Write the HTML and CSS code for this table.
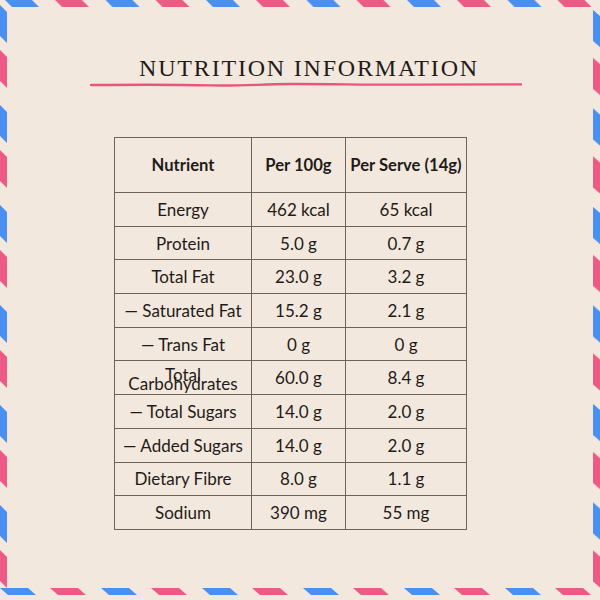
FILE: index.html
```html
<!DOCTYPE html>
<html>
<head>
<meta charset="utf-8">
<link rel="stylesheet" href="styles.css">
</head>
<body>
<div class="page">
  <svg class="airmail" width="600" height="600" viewBox="0 0 600 600">
    <defs>
      <pattern id="ptop" patternUnits="userSpaceOnUse" x="5" y="0" width="100.5" height="8">
        <polygon points="0,0 27,0 34,7 7,7" fill="#4a8ff2"/>
        <polygon points="50,0 77,0 84,7 57,7" fill="#ee5a86"/>
      </pattern>
      <pattern id="pbottom" patternUnits="userSpaceOnUse" x="0" y="588" width="101" height="8">
        <polygon points="0,0 28,0 36,7 8,7" fill="#4a8ff2"/>
        <polygon points="50,0 78,0 86,7 58,7" fill="#ee5a86"/>
      </pattern>
      <pattern id="pleft" patternUnits="userSpaceOnUse" x="0" y="5" width="8" height="100">
        <polygon points="0,0 7,7 7,38 0,31" fill="#4a8ff2"/>
        <polygon points="0,45 7,52 7,83 0,76" fill="#ee5a86"/>
      </pattern>
      <pattern id="pright" patternUnits="userSpaceOnUse" x="592" y="9" width="8" height="98.5">
        <polygon points="0,0 8,7 8,38 0,31" fill="#4a8ff2"/>
        <polygon points="0,48 8,55 8,86 0,79" fill="#ee5a86"/>
      </pattern>
    </defs>
    <rect x="0" y="0" width="600" height="7" fill="url(#ptop)"/>
    <rect x="0" y="588" width="600" height="7" fill="url(#pbottom)"/>
    <rect x="0" y="0" width="7" height="600" fill="url(#pleft)"/>
    <rect x="593" y="0" width="7" height="600" fill="url(#pright)"/>
  </svg>

  <header class="title-block">
    <h1 class="title">NUTRITION INFORMATION</h1>
    <svg class="underline" width="432" height="8" viewBox="0 0 432 8">
      <path d="M1 4 C 40 3.6, 80 3.2, 120 4.4 C 150 5.2, 170 3.2, 200 3 C 240 2.8, 280 4, 320 3.6 C 360 3.2, 400 3.4, 431 3.4" fill="none" stroke="#e9557f" stroke-width="2.4" stroke-linecap="round"/>
    </svg>
  </header>

  <table class="nutrition">
    <thead>
      <tr class="head-row">
        <th class="c1">Nutrient</th>
        <th class="c2">Per 100g</th>
        <th class="c3">Per Serve (14g)</th>
      </tr>
    </thead>
    <tbody>
      <tr><td>Energy</td><td>462 kcal</td><td>65 kcal</td></tr>
      <tr><td>Protein</td><td>5.0 g</td><td>0.7 g</td></tr>
      <tr><td>Total Fat</td><td>23.0 g</td><td>3.2 g</td></tr>
      <tr><td>— Saturated Fat</td><td>15.2 g</td><td>2.1 g</td></tr>
      <tr><td>— Trans Fat</td><td>0 g</td><td>0 g</td></tr>
      <tr><td class="squeezed">Total Carbohydrates</td><td>60.0 g</td><td>8.4 g</td></tr>
      <tr><td>— Total Sugars</td><td>14.0 g</td><td>2.0 g</td></tr>
      <tr><td>— Added Sugars</td><td>14.0 g</td><td>2.0 g</td></tr>
      <tr><td>Dietary Fibre</td><td>8.0 g</td><td>1.1 g</td></tr>
      <tr><td>Sodium</td><td>390 mg</td><td>55 mg</td></tr>
    </tbody>
  </table>
</div>
</body>
</html>
```

FILE: styles.css
```css
* { box-sizing: border-box; }

html, body {
  margin: 0;
  padding: 0;
}

body {
  background: #f2e8de;
  width: 600px;
  height: 600px;
  overflow: hidden;
}

.page {
  position: relative;
  width: 600px;
  height: 600px;
  background: #f2e8de;
  padding-top: 53px;
}

.airmail {
  position: absolute;
  left: 0;
  top: 0;
  pointer-events: none;
}

.title-block {
  display: flex;
  flex-direction: column;
  align-items: flex-start;
}

.title {
  margin: 0;
  align-self: center;
  padding-left: 18px;
  font-family: "Liberation Serif", "DejaVu Serif", serif;
  font-weight: normal;
  font-size: 24px;
  line-height: 30px;
  letter-spacing: 1.8px;
  color: #1f1b18;
}

.underline {
  display: block;
  margin-left: 90px;
  margin-top: -2px;
}

.nutrition {
  margin-left: 114px;
  margin-top: 48px;
  width: 352px;
  border-collapse: collapse;
  font-family: Lato, "Noto Sans", sans-serif;
  font-size: 17px;
  color: #1f1b18;
  table-layout: fixed;
}

.nutrition th,
.nutrition td {
  border: 1px solid #6f6259;
  text-align: center;
  vertical-align: middle;
  padding: 0 2px;
  white-space: nowrap;
}

.nutrition th {
  font-weight: 700;
  font-size: 16.6px;
  height: 55px;
  padding: 0 1px;
}

.nutrition td {
  height: 33.7px;
}

.c1 { width: 137px; }
.c2 { width: 94px; }
.c3 { width: 121px; }

.nutrition td.squeezed {
  white-space: normal;
  line-height: 9px;
  padding: 2px 8px 0;
}
```
